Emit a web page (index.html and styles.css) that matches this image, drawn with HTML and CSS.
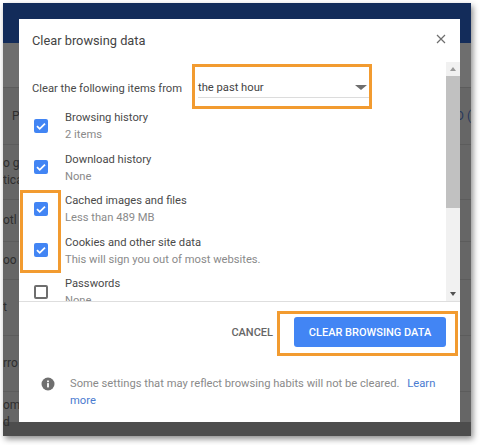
FILE: index.html
```html
<!DOCTYPE html>
<html lang="en">
<head>
    <meta charset="UTF-8">
    <title>Clear browsing data</title>
    <link rel="stylesheet" href="styles.css">
</head>
<body>
    <div class="frame">
        <!-- page behind the dialog, only the edges show -->
        <div class="page">
            <div class="page-header"></div>
            <div class="page-row row-a"><span></span></div>
            <div class="page-row row-b"><span class="page-title">P</span><span class="page-link">D (</span></div>
            <div class="page-row row-c"><span>o g<br>tica</span></div>
            <div class="page-row row-d"><span>otl</span></div>
            <div class="page-row row-e"><span>oo</span></div>
            <div class="page-row row-f"><span class="page-title">t</span></div>
            <div class="page-row row-g"><span>rro</span></div>
            <div class="page-row row-h"><span>om<br>d</span></div>
        </div>

        <div class="dialog">
            <div class="dialog-title">
                <h1>Clear browsing data</h1>
                <svg class="close" width="10" height="10" viewBox="0 0 10 10"><path d="M1 1l8 8M9 1l-8 8" stroke="#6e6e6e" stroke-width="1.2" fill="none"/></svg>
            </div>
            <div class="dialog-body">
                <div class="scroll-area">
                    <div class="range-row">
                        <span class="range-label">Clear the following items from</span>
                        <div class="select">
                            <span>the past hour</span>
                            <i class="caret"></i>
                        </div>
                    </div>
                    <div class="item">
                        <div class="checkbox checked"><svg width="14" height="14" viewBox="0 0 14 14"><path d="M3 7.2l2.7 2.6L11 4.6" stroke="#fff" stroke-width="1.8" fill="none"/></svg></div>
                        <div class="item-text"><div class="item-name">Browsing history</div><div class="item-note">2 items</div></div>
                    </div>
                    <div class="item">
                        <div class="checkbox checked"><svg width="14" height="14" viewBox="0 0 14 14"><path d="M3 7.2l2.7 2.6L11 4.6" stroke="#fff" stroke-width="1.8" fill="none"/></svg></div>
                        <div class="item-text"><div class="item-name">Download history</div><div class="item-note">None</div></div>
                    </div>
                    <div class="item">
                        <div class="checkbox checked"><svg width="14" height="14" viewBox="0 0 14 14"><path d="M3 7.2l2.7 2.6L11 4.6" stroke="#fff" stroke-width="1.8" fill="none"/></svg></div>
                        <div class="item-text"><div class="item-name">Cached images and files</div><div class="item-note">Less than 489 MB</div></div>
                    </div>
                    <div class="item">
                        <div class="checkbox checked"><svg width="14" height="14" viewBox="0 0 14 14"><path d="M3 7.2l2.7 2.6L11 4.6" stroke="#fff" stroke-width="1.8" fill="none"/></svg></div>
                        <div class="item-text"><div class="item-name">Cookies and other site data</div><div class="item-note">This will sign you out of most websites.</div></div>
                    </div>
                    <div class="item">
                        <div class="checkbox"></div>
                        <div class="item-text"><div class="item-name">Passwords</div><div class="item-note">None</div></div>
                    </div>
                </div>
                <div class="scrollbar">
                    <i class="arrow-up"></i>
                    <div class="thumb"></div>
                    <i class="arrow-down"></i>
                </div>
            </div>
            <div class="dialog-actions">
                <button class="btn-cancel">CANCEL</button>
                <button class="btn-clear">CLEAR BROWSING DATA</button>
            </div>
            <div class="dialog-notice">
                <svg class="info" width="14" height="14" viewBox="0 0 14 14"><circle cx="7" cy="7" r="6.5" fill="#6f6f6f"/><rect x="6.1" y="6.1" width="1.8" height="4.3" fill="#fff"/><rect x="6.1" y="3.5" width="1.8" height="1.7" fill="#fff"/></svg>
                <p>Some settings that may reflect browsing habits will not be cleared. &nbsp;&thinsp;<a href="#">Learn more</a></p>
            </div>
        </div>

        <!-- orange callouts drawn over the screenshot -->
        <div class="callout callout-select"></div>
        <div class="callout callout-checks"></div>
        <div class="callout callout-button"></div>
    </div>
</body>
</html>
```

FILE: styles.css
```css
* {
    margin: 0;
    padding: 0;
    box-sizing: border-box;
    font-family: 'Roboto', sans-serif;
}

body {
    background-color: #fff;
    width: 480px;
    height: 445px;
    overflow: hidden;
}

.frame {
    position: relative;
    width: 468px;
    height: 433px;
    margin: 3px 0 0 3px;
    box-shadow: 2px 3px 6px rgba(0, 0, 0, 0.45);
}

.page {
    height: 100%;
    display: flex;
    flex-direction: column;
    background: #666;
    color: #2e2e2e;
    font-size: 12px;
    line-height: 17px;
    overflow: hidden;
}

.page-header {
    height: 40px;
    background: #132c5a;
}

.page-row {
    display: flex;
    justify-content: space-between;
    align-items: center;
    border-bottom: 1px solid #5c5c5c;
}

.page-title {
    margin-left: 9px;
}

.page-link {
    color: #27375c;
    white-space: nowrap;
}

.row-a { height: 45px; background: #6e6e6e; }
.row-b { height: 57px; }
.row-c { height: 55px; }
.row-d { height: 42px; }
.row-e { height: 38px; }
.row-f { height: 56px; }
.row-g { height: 56px; }
.row-h {
    height: 44px;
    border-bottom: 0;
    background: linear-gradient(#666 30px, #4d4d4d 30px);
}

.row-f .page-title {
    margin-left: 0;
}

.dialog {
    position: absolute;
    left: 16px;
    top: 16px;
    width: 441px;
    height: 403px;
    background: #fff;
    display: flex;
    flex-direction: column;
    color: #5f6368;
}

.dialog-title {
    height: 43px;
    display: flex;
    justify-content: space-between;
    align-items: center;
    padding: 0 14px 4px 13px;
}

.dialog-title h1 {
    margin-top: 3px;
    font-size: 12.8px;
    font-weight: 400;
    color: #444;
}

.dialog-body {
    height: 240px;
    display: flex;
    border-bottom: 1px solid #dedede;
}

.scroll-area {
    flex: 1;
    overflow: hidden;
    padding-left: 13px;
}

.range-row {
    display: flex;
    align-items: center;
    height: 43px;
    padding-top: 9px;
    font-size: 11.2px;
}

.range-label {
    width: 166px;
    color: #4a4a4a;
}

.select {
    width: 171px;
    height: 19px;
    display: flex;
    justify-content: space-between;
    align-items: center;
    border-bottom: 1px solid #dcdcdc;
    padding: 0 2px 0 0;
    color: #444;
    font-size: 11.2px;
}

.caret {
    width: 0;
    height: 0;
    border-left: 6px solid transparent;
    border-right: 6px solid transparent;
    border-top: 5px solid #6e6e6e;
}

.item {
    display: flex;
    align-items: center;
    height: 41.5px;
}

.checkbox {
    width: 14px;
    height: 14px;
    margin: 0 17px 0 2px;
    border: 2px solid #6e6e6e;
    border-radius: 2px;
    flex: none;
}

.checkbox.checked {
    background: #4285f4;
    border: 0;
}

.checkbox svg {
    display: block;
}

.item-text {
    padding-top: 1px;
}

.item-name {
    font-size: 11.2px;
    line-height: 17px;
    color: #4a4a4a;
}

.item-note {
    font-size: 11.2px;
    line-height: 17px;
    color: #8a8a8a;
}

.scrollbar {
    width: 14px;
    display: flex;
    flex-direction: column;
    align-items: center;
    background: #f1f1f1;
}

.thumb {
    width: 100%;
    height: 132px;
    margin-top: 5px;
    background: #c1c1c1;
}

.arrow-up,
.arrow-down {
    width: 0;
    height: 0;
    border-left: 3px solid transparent;
    border-right: 3px solid transparent;
}

.arrow-up {
    margin-top: 5px;
    border-bottom: 4px solid #9a9a9a;
}

.arrow-down {
    margin-top: auto;
    margin-bottom: 5px;
    border-top: 4px solid #505050;
}

.dialog-actions {
    height: 60px;
    display: flex;
    justify-content: flex-end;
    align-items: center;
    padding-right: 14px;
}

.dialog-actions button {
    border: none;
    background: transparent;
    font-size: 11px;
    font-weight: 500;
    cursor: pointer;
}

.btn-cancel {
    color: #666;
    margin-right: 21px;
}

.dialog-actions .btn-clear {
    width: 152px;
    height: 30px;
    background: #4285f4;
    color: #fff;
    border-radius: 3px;
}

.dialog-notice {
    display: flex;
    padding: 13px 22px 0 22px;
    font-size: 11.2px;
    line-height: 17px;
    color: #8a8a8a;
}

.dialog-notice p {
    width: 367px;
}

.info {
    flex: none;
    margin: 2px 15px 0 0;
}

.dialog-notice a {
    color: #4a7bd0;
    text-decoration: none;
}

.callout {
    position: absolute;
    border: 3px solid #f29b30;
}

.callout-select { left: 189px; top: 61px; width: 180px; height: 45px; }
.callout-checks { left: 17px; top: 187px; width: 41px; height: 83px; }
.callout-button { left: 274px; top: 308px; width: 181px; height: 45px; }
```
